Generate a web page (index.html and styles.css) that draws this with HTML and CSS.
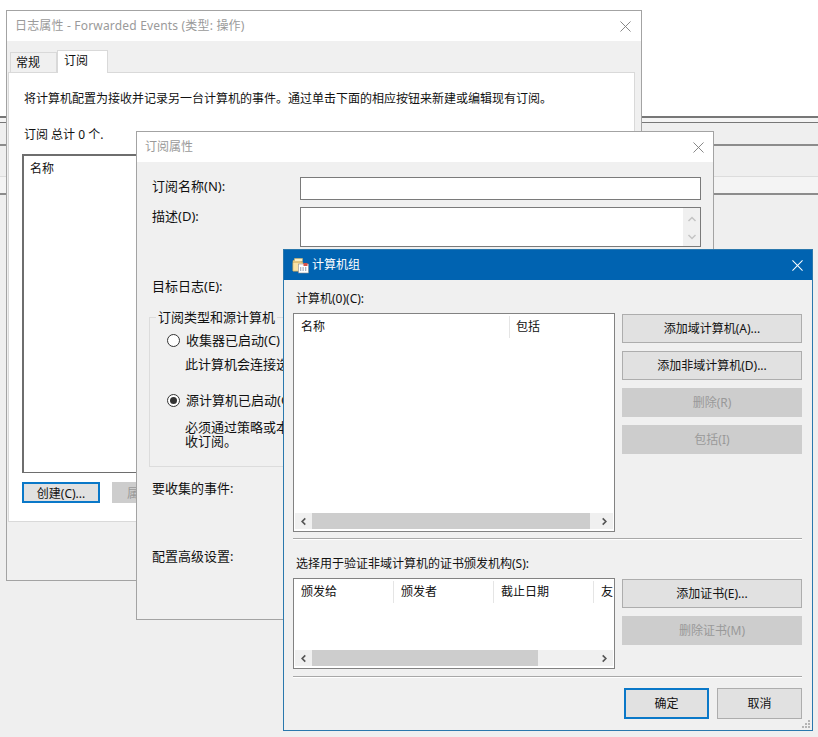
FILE: index.html
```html
<!DOCTYPE html>
<html lang="zh-CN">
<head>
<meta charset="utf-8">
<title>计算机组</title>
<link rel="stylesheet" href="styles.css">
</head>
<body>
<div class="desktop">
  <div class="backdrop">
    <div class="band band-white"></div>
    <div class="band band-double"></div>
    <div class="band band-a"></div>
    <div class="band band-b"></div>
    <div class="band band-c"></div>
    <div class="band band-rest"></div>
  </div>

  <section class="window win-log">
    <header class="titlebar">
      <span class="title-muted title-wide">日志属性 - Forwarded Events (类型: 操作)</span>
      <svg class="close" viewBox="0 0 12 12"><path d="M.5.5l11 11M11.5.5l-11 11" stroke="#7d7d7d" fill="none"/></svg>
    </header>
    <div class="tabs">
      <span class="tab">常规</span>
      <span class="tab tab-active">订阅</span>
    </div>
    <div class="tab-panel">
      <p class="intro">将计算机配置为接收并记录另一台计算机的事件。通过单击下面的相应按钮来新建或编辑现有订阅。</p>
      <p class="total">订阅 总计 0 个.</p>
      <div class="sub-list"><span>名称</span></div>
      <div class="panel-buttons">
        <button class="btn btn-small btn-default">创建(C)...</button>
        <button class="btn btn-small btn-off">属性(P)...</button>
      </div>
    </div>
  </section>

  <section class="window win-sub">
    <header class="titlebar">
      <span class="title-muted">订阅属性</span>
      <svg class="close" viewBox="0 0 12 12"><path d="M.5.5l11 11M11.5.5l-11 11" stroke="#7d7d7d" fill="none"/></svg>
    </header>
    <div class="sub-body">
      <div class="form-row">
        <label class="form-label">订阅名称(N):</label>
        <div class="input"></div>
      </div>
      <div class="form-row form-row-desc">
        <label class="form-label form-label-top">描述(D):</label>
        <div class="input input-area">
          <div class="v-scroll">
            <svg viewBox="0 0 10 8"><path d="M1.5 6L5 2.5 8.500 6" stroke="#c4c4c4" stroke-width="1.500" fill="none"/></svg>
            <svg viewBox="0 0 10 8"><path d="M1.500 2L5 5.500 8.500 2" stroke="#c4c4c4" stroke-width="1.500" fill="none"/></svg>
          </div>
        </div>
      </div>
      <div class="plain-label label-log">目标日志(E):</div>
      <fieldset class="group">
        <legend>订阅类型和源计算机</legend>
        <div class="radio-row"><span class="radio"></span>收集器已启动(C)</div>
        <div class="radio-note">此计算机会连接选定的源计算机并提供订阅。</div>
        <div class="radio-row radio-row-two"><span class="radio radio-on"></span>源计算机已启动(O)</div>
        <div class="radio-note radio-note-two">必须通过策略或本地配置对源计算机进行配置以接<br>收订阅。</div>
      </fieldset>
      <div class="plain-label label-events">要收集的事件:</div>
      <div class="plain-label label-adv">配置高级设置:</div>
    </div>
  </section>

  <section class="window win-group">
    <header class="titlebar titlebar-active">
      <svg class="app-icon" viewBox="0 0 17 17">
        <path d="M1 3.500V14h9V5.500L7 3.500z" fill="#f3d68b" stroke="#c9a55a" stroke-width=".6"/>
        <path d="M2.500 1.500h8v3h-8z" fill="#fbeec2" stroke="#d2b26a" stroke-width=".6"/>
        <path d="M1 5.500h10v8.500H1z" fill="#f9e3a6" stroke="#d5b163" stroke-width=".6"/>
        <rect x="6.500" y="7" width="10" height="9" fill="#fff" stroke="#8d8d8d" stroke-width=".6"/>
        <rect x="11.500" y="6" width="4" height="3" fill="#d9534a"/>
        <path d="M8 11h1.300M10.500 11h1.300M13 11h1.300M8 13h1.300M10.500 13h1.300M13 13h1.300" stroke="#5c6b85" stroke-width="1.200"/>
      </svg>
      <span class="title-light">计算机组</span>
      <svg class="close close-light" viewBox="0 0 12 12"><path d="M.5.5l11 11M11.500.5l-11 11" stroke="#fff" fill="none" stroke-width="1.100"/></svg>
    </header>
    <div class="group-body">
      <div class="section-label">计算机(0)(C):</div>
      <div class="split">
        <div class="list list-computers">
          <div class="list-head">
            <span class="col col-name">名称</span>
            <span class="col col-rest col-include">包括</span>
          </div>
          <div class="h-scroll">
            <svg class="arrow" viewBox="0 0 8 10"><path d="M6 1.500L2.500 5 6 8.500" stroke="#555" stroke-width="1.800" fill="none"/></svg>
            <span class="thumb thumb-long"></span>
            <span class="track"></span>
            <svg class="arrow" viewBox="0 0 8 10"><path d="M2 1.500L5.500 5 2 8.500" stroke="#555" stroke-width="1.800" fill="none"/></svg>
          </div>
        </div>
        <div class="side-buttons">
          <button class="btn">添加域计算机(A)...</button>
          <button class="btn">添加非域计算机(D)...</button>
          <button class="btn btn-off">删除(R)</button>
          <button class="btn btn-off">包括(I)</button>
        </div>
      </div>
      <div class="rule rule-one"></div>
      <div class="section-label section-label-two">选择用于验证非域计算机的证书颁发机构(S):</div>
      <div class="split">
        <div class="list list-certs">
          <div class="list-head">
            <span class="col col-cert">颁发给</span>
            <span class="col col-cert">颁发者</span>
            <span class="col col-cert">截止日期</span>
            <span class="col col-rest">友好名称</span>
          </div>
          <div class="h-scroll">
            <svg class="arrow" viewBox="0 0 8 10"><path d="M6 1.500L2.500 5 6 8.500" stroke="#555" stroke-width="1.800" fill="none"/></svg>
            <span class="thumb thumb-short"></span>
            <span class="track"></span>
            <svg class="arrow" viewBox="0 0 8 10"><path d="M2 1.500L5.500 5 2 8.500" stroke="#555" stroke-width="1.800" fill="none"/></svg>
          </div>
        </div>
        <div class="side-buttons side-buttons-cert">
          <button class="btn">添加证书(E)...</button>
          <button class="btn btn-off">删除证书(M)</button>
        </div>
      </div>
      <div class="rule rule-two"></div>
      <div class="footer">
        <button class="btn btn-foot btn-default">确定</button>
        <button class="btn btn-foot">取消</button>
      </div>
    </div>
    <svg class="grip" viewBox="0 0 8 8"><path d="M6 0h2v2H6zM3 3h2v2H3zM6 3h2v2H6zM0 6h2v2H0zM3 6h2v2H3zM6 6h2v2H6z" fill="#b5b5b5"/></svg>
  </section>
</div>
</body>
</html>
```
FILE: styles.css
```css
* { box-sizing: border-box; }
html, body { margin: 0; padding: 0; }
body {
  width: 818px;
  height: 737px;
  overflow: hidden;
  background: #efefef;
  font-family: "Noto Sans", "Noto Sans CJK SC", sans-serif;
  font-size: 12px;
  line-height: 20px;
  color: #111;
}
.desktop { position: relative; width: 818px; height: 737px; overflow: hidden; }

.backdrop { display: flex; flex-direction: column; height: 100%; }
.band-white { height: 116px; background: #fff; }
.band-double { height: 7px; background: #f4f4f4; border-top: 2px solid #777; border-bottom: 1px solid #777; }
.band-a { height: 23px; background: #efefef; border-bottom: 2px solid #8c8c8c; }
.band-b { height: 31px; background: #efefef; border-bottom: 1px solid #dcdcdc; }
.band-c { height: 18px; background: #f4f4f4; border-bottom: 2px solid #8c8c8c; }
.band-rest { flex: 1; background: #efefef; }

.window {
  position: absolute;
  display: flex;
  flex-direction: column;
  background: #f0f0f0;
  border: 1px solid #a3a3a3;
}
.win-log { left: 6px; top: 10px; width: 636px; height: 571px; }
.win-sub { left: 136px; top: 131px; width: 578px; height: 489px; overflow: hidden; font-size: 13px; }
.win-group { left: 283px; top: 249px; width: 530px; height: 482px; border-color: #2a78ad; }

.titlebar {
  display: flex;
  align-items: center;
  flex: none;
  height: 30px;
  padding-left: 8px;
  background: #fff;
  font-size: 12px;
}
.title-muted { color: #9a9a9a; }
.title-wide { letter-spacing: .18px; }
.title-light { color: #fff; margin-left: 3px; }
.close { width: 11px; height: 11px; margin-left: auto; margin-right: 9px; }
.win-log .close { margin-right: 10px; }
.close-light { margin-right: 9px; }
.titlebar-active { background: #0063b1; }
.app-icon { width: 17px; height: 17px; }

.tabs { display: flex; align-items: flex-end; height: 31px; padding-left: 3px; flex: none; }
.tab {
  width: 47px;
  height: 20px;
  padding-left: 5px;
  line-height: 19px;
  background: #f0f0f0;
  border: 1px solid #d9d9d9;
  border-bottom: none;
}
.tab-active {
  width: 51px;
  height: 23px;
  margin-bottom: -1px;
  padding-left: 6px;
  background: #fff;
  position: relative;
  z-index: 1;
}
.tab-panel {
  width: 627px;
  height: 450px;
  margin-left: 1px;
  padding: 16px 14px 0 15px;
  background: #fff;
  border: 1px solid #d9d9d9;
  display: flex;
  flex-direction: column;
  align-items: flex-start;
}
.intro { margin: 0; white-space: nowrap; }
.total { margin: 16px 0 0; }
.sub-list {
  width: 500px;
  height: 319px;
  margin: 9px 0 0 -2px;
  padding: 3px 6px;
  border: 2px solid #6e6e6e;
  border-bottom-width: 1px;
  border-right-width: 1px;
  background: #fff;
}
.panel-buttons { display: flex; gap: 12px; margin: 9px 0 0 -2px; }

.btn {
  display: block;
  width: 180px;
  height: 29px;
  padding: 0;
  font: inherit;
  color: #111;
  background: #e1e1e1;
  border: 1px solid #adadad;
}
.btn-off { background: #cdcdcd; border-color: #cdcdcd; color: #999; }
.btn-small { width: 78px; height: 21px; line-height: 17px; padding-top: 1px; }
.btn-default { border: 2px solid #0a78c8; }
.btn-foot { width: 85px; height: 31px; }

.sub-body { display: flex; flex-direction: column; padding: 15px 12px 0 15px; }
.form-row { display: flex; align-items: flex-start; }
.form-row-desc { margin-top: 7px; }
.form-label { width: 148px; flex: none; line-height: 19px; }
.form-label-top { line-height: 18px; }
.input { flex: 1; height: 23px; background: #fff; border: 1px solid #7a7a7a; }
.input-area { height: 40px; display: flex; justify-content: flex-end; }
.v-scroll {
  width: 17px;
  display: flex;
  flex-direction: column;
  justify-content: space-between;
  align-items: center;
  padding: 7px 0 5px;
  background: #f0f0f0;
}
.v-scroll svg { width: 10px; height: 8px; }
.plain-label { height: 20px; white-space: nowrap; }
.label-log { margin-top: 29px; }
.label-events { margin-top: 11px; }
.label-adv { margin-top: 48px; }
.group {
  width: 300px;
  height: 158px;
  margin: 13px 0 0 -3px;
  padding: 0 0 0 17px;
  border: 1px solid #dcdcdc;
  border-right: none;
}
.group legend { margin-left: -11px; padding: 0 2px; line-height: 16px; white-space: nowrap; }
.radio-row { display: flex; align-items: center; margin-top: 5px; white-space: nowrap; }
.radio-row-two { margin-top: 16px; }
.radio {
  width: 13px;
  height: 13px;
  margin-right: 6px;
  border: 1px solid #333;
  border-radius: 50%;
  background: #fff;
  flex: none;
  display: flex;
  align-items: center;
  justify-content: center;
}
.radio-on::after {
  content: "";
  width: 7px;
  height: 7px;
  border-radius: 50%;
  background: #333;
}
.radio-note { margin: 4px 0 0 18px; white-space: nowrap; }
.radio-note-two { margin-top: 10px; line-height: 14px; }

.group-body { display: flex; flex-direction: column; padding: 9px 10px 0 9px; }
.section-label { height: 20px; padding-left: 3px; white-space: nowrap; }
.section-label-two { margin-top: 14px; }
.split { display: flex; gap: 7px; margin-top: 4px; align-items: flex-start; }
.list {
  width: 322px;
  flex: none;
  display: flex;
  flex-direction: column;
  justify-content: space-between;
  background: #fff;
  border: 1px solid #828282;
  padding: 2px 1px 2px 0;
  overflow: hidden;
}
.list-computers { height: 219px; }
.list-certs { height: 91px; }
.list-head { display: flex; height: 22px; }
.col {
  height: 22px;
  padding-left: 7px;
  line-height: 21px;
  white-space: nowrap;
  overflow: hidden;
  border-right: 1px solid #e5e5e5;
  flex: none;
}
.col-name { width: 216px; }
.col-cert { width: 100px; }
.col-rest { flex: 1; min-width: 0; border-right: none; }
.col-include { padding-left: 6px; }
.h-scroll { display: flex; align-items: center; height: 16px; margin-left: 1px; background: #f0f0f0; }
.arrow { width: 17px; height: 9px; flex: none; }
.thumb { height: 16px; background: #cdcdcd; flex: none; }
.thumb-long { width: 278px; }
.thumb-short { width: 226px; }
.track { flex: 1; }
.side-buttons { display: flex; flex-direction: column; gap: 8px; margin-top: 1px; }
.rule { height: 2px; background: #a8a8a8; border-bottom: 1px solid #fff; flex: none; }
.rule-one { margin-top: 6px; }
.rule-two { margin-top: 7px; }
.footer { display: flex; justify-content: flex-end; gap: 8px; margin-top: 10px; }
.grip { position: absolute; right: 2px; bottom: 2px; width: 8px; height: 8px; }
```
